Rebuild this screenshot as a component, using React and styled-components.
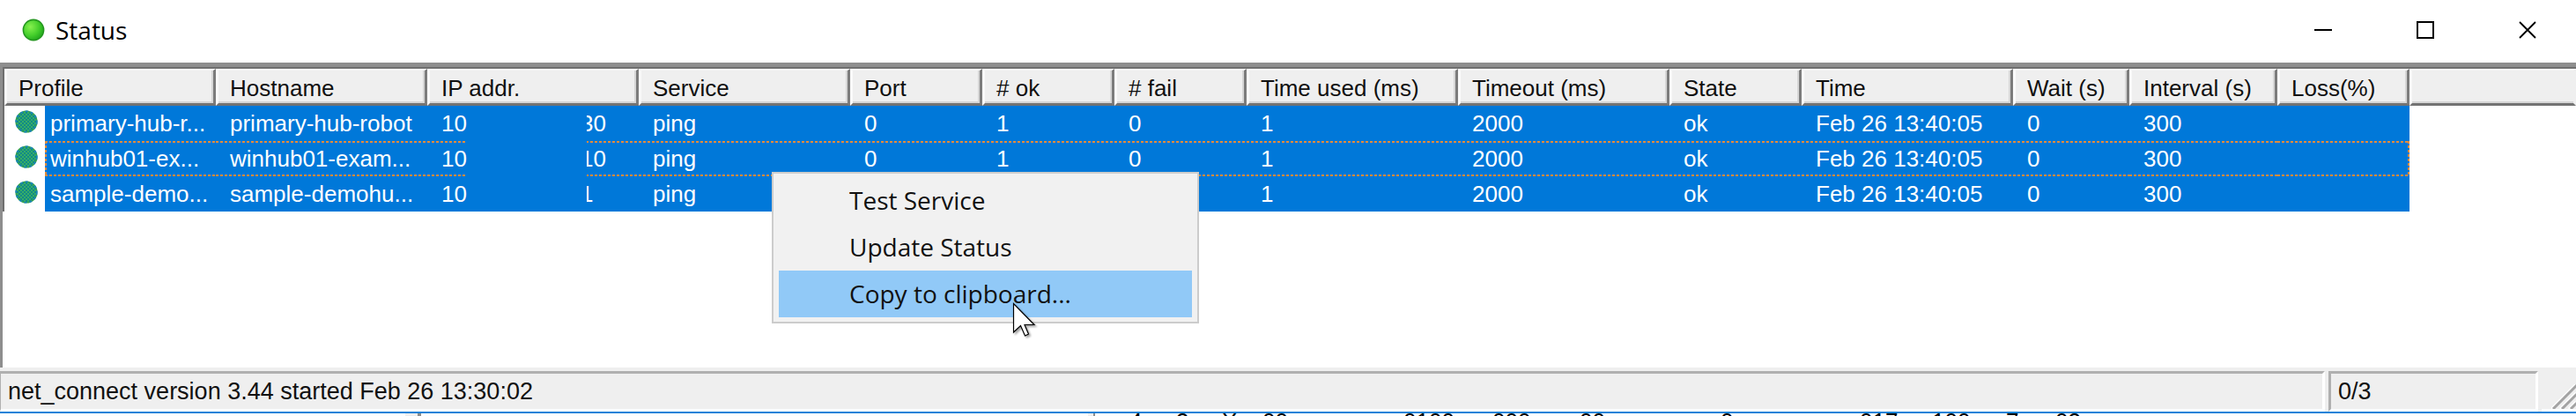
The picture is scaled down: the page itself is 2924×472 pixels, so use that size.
import React from "react"
import styled, { createGlobalStyle } from "styled-components"


const COLUMNS = [
  { label: 'Profile', width: 240 },
  { label: 'Hostname', width: 240 },
  { label: 'IP addr.', width: 240 },
  { label: 'Service', width: 240 },
  { label: 'Port', width: 150 },
  { label: '# ok', width: 150 },
  { label: '# fail', width: 150 },
  { label: 'Time used (ms)', width: 240 },
  { label: 'Timeout (ms)', width: 240 },
  { label: 'State', width: 150 },
  { label: 'Time', width: 240 },
  { label: 'Wait (s)', width: 132 },
  { label: 'Interval (s)', width: 168 },
  { label: 'Loss(%)', width: 150 }
]

const REST = ['ping', '0', '1', '0', '1', '2000', 'ok', 'Feb 26 13:40:05', '0', '300', '']

const ROWS = [
  { profile: 'primary-hub-r...', host: 'primary-hub-robot', ipEnd: '30' },
  { profile: 'winhub01-ex...', host: 'winhub01-exam...', ipEnd: '10', focused: true },
  { profile: 'sample-demo...', host: 'sample-demohu...', ipEnd: '1' }
]

const MENU = ['Test Service', 'Update Status', 'Copy to clipboard...']

// the window behind, only its top edge is visible
const BEHIND = ['4', '3', 'X', '00', '0100', '000', '00', '0', '017', '100', '7', '03']

const GlobalStyle = createGlobalStyle`
  * {
    box-sizing: border-box;
  }

  body {
    margin: 0;
    background: white;
    overflow: hidden;
  }

  button {
    border: 0 none;
    margin: 0;
    padding: 0;
    background: none;
    font: inherit;
    color: inherit;
  }
`

const Window = styled.main`
  position: relative;
  display: flex;
  flex-direction: column;
  min-height: 100vh;
  font-family: "Liberation Sans", Arial, sans-serif;
  font-size: 26px;
  line-height: 30px;
  color: #111;
`

const TitleBar = styled.header`
  display: flex;
  align-items: center;
  height: 71px;
  padding-left: 25px;
  padding-bottom: 4px;
`

const Title = styled.h1`
  flex: 1;
  margin: 0 0 0 12px;
  font-family: "Open Sans", "Noto Sans", sans-serif;
  font-size: 28px;
  font-weight: 400;
  line-height: 36px;
  color: black;
`

const WindowButtons = styled.div`
  display: flex;
  gap: 6px;
`

const WindowButton = styled.button`
  display: flex;
  align-items: center;
  justify-content: center;
  width: 110px;
  height: 60px;
`

const ListFrame = styled.section`
  flex: 1;
  border-top: 5px solid #8e8e8e;
  border-left: 3px solid #8e8e8e;
`

const List = styled.div`
  height: 100%;
  border-top: 2px solid #6f6f6f;
  border-left: 2px solid #6f6f6f;
  overflow: hidden;
`

const Table = styled.table`
  width: 100%;
  table-layout: fixed;
  border-collapse: separate;
  border-spacing: 0;
`

const HeadCell = styled.th`
  height: 42px;
  padding: 2px 0 0 13px;
  background: #efefef;
  border-top: 2px solid #fafafa;
  border-left: 3px solid #fafafa;
  border-right: 3px solid ${props => props.$last ? '#efefef' : '#7c7c7c'};
  border-bottom: 3px solid #737373;
  box-shadow: inset ${props => props.$last ? 0 : -2}px -2px 0 #d6d6d6;
  font-weight: 400;
  text-align: left;
  white-space: nowrap;
`

const focusDots = `
  repeating-linear-gradient(90deg, #e08c3c 0 3px, transparent 3px 5px) top / 100% 2px no-repeat,
  repeating-linear-gradient(90deg, #e08c3c 0 3px, transparent 3px 5px) bottom / 100% 2px no-repeat,
`

const sideDots = side => `
  repeating-linear-gradient(#e08c3c 0 3px, transparent 3px 5px) ${side} / 2px 100% no-repeat,
`

const Selection = styled.div`
  display: flex;
  flex: 1;
  align-items: center;
  height: 40px;
  padding-left: ${props => props.$first ? 6 : 16}px;
  background:
    ${props => props.$focused ? focusDots : ''}
    ${props => props.$focused && props.$first ? sideDots('left') : ''}
    ${props => props.$focused && props.$last ? sideDots('right') : ''}
    linear-gradient(#0078d9, #0078d9);
  color: white;
  white-space: nowrap;
`

const Cell = styled.td`
  padding: 0;
`

const ProfileCell = styled.div`
  display: flex;
`

const StateIcon = styled.span`
  display: flex;
  align-items: center;
  width: 46px;
  padding-left: 12px;
  padding-bottom: 4px;
`

const Redacted = styled.span`
  z-index: 1;
  width: 136px;
  height: 40px;
  margin-right: -7px;
  background: #0078d9;
`

const StatusBar = styled.footer`
  display: flex;
  gap: 4px;
  height: 50px;
  padding-top: 4px;
  background: #efefef;
  font-size: 27px;
`

const Panel = styled.div`
  display: flex;
  align-items: center;
  flex: ${props => props.$width ? `0 0 ${props.$width}px` : 1};
  padding-left: 8px;
  border: 3px solid white;
  border-top-color: #b0b0b0;
  border-left: ${props => props.$width ? 3 : 1}px solid #b0b0b0;
`

const Grip = styled.div`
  display: flex;
  align-items: flex-end;
  justify-content: flex-end;
  width: 39px;
  border-bottom: 3px solid white;
`

const Behind = styled.div`
  display: grid;
  grid-template-columns: 460px 775px 47px 53px 52px 46px 160px 101px 99px 160px 158px 82px 84px 56px 1fr;
  height: 5px;
  border-top: 2px solid #1683d8;
  overflow: hidden;
  font-size: 26px;
  line-height: 18px;
  color: black;
`

const BehindEdge = styled.span`
  width: ${props => props.$width}px;
  height: 3px;
  background: #eee;
  border-right: ${props => props.$line}px solid #8c8c8c;
`

const Menu = styled.div`
  position: absolute;
  top: 195px;
  left: 876px;
  z-index: 2;
  display: flex;
  flex-direction: column;
  width: 485px;
  padding: 4px 6px 5px;
  background: #f1f1f1;
  border: 2px solid #cccccc;
`

const MenuItem = styled.button`
  height: 53px;
  padding: 0 0 2px 80px;
  background: ${props => props.$active ? '#91c9f7' : 'transparent'};
  font-family: "Open Sans", "Noto Sans", sans-serif;
  font-size: 28px;
  line-height: 36px;
  text-align: left;
`

const Pointer = styled.svg`
  position: absolute;
  top: 342px;
  left: 1149px;
  z-index: 3;
  filter: drop-shadow(2px 2px 1px rgba(0, 0, 0, 0.35));
`


const GreenDot = () => (
  <svg width="26" height="26" viewBox="0 0 26 26" aria-hidden="true">
    <defs>
      <radialGradient id="lamp" cx="0.35" cy="0.35" r="0.7">
        <stop offset="0" stopColor="#86f04e" />
        <stop offset="0.6" stopColor="#45cf2c" />
        <stop offset="1" stopColor="#22a81c" />
      </radialGradient>
    </defs>
    <circle cx="13" cy="13" r="11.6" fill="url(#lamp)" stroke="#24961f" strokeWidth="1.6" />
  </svg>
)

const HatchedDot = () => (
  <svg width="26" height="26" viewBox="0 0 26 26" aria-hidden="true">
    <defs>
      <pattern id="hatch" width="4" height="4" patternUnits="userSpaceOnUse">
        <rect width="4" height="4" fill="#128a86" />
        <rect width="2" height="2" fill="#35ad68" />
        <rect x="2" y="2" width="2" height="2" fill="#35ad68" />
      </pattern>
    </defs>
    <circle cx="13" cy="13" r="11.8" fill="url(#hatch)" stroke="#35a04f" strokeWidth="1.6" />
    <circle cx="13" cy="13" r="11.8" fill="none" stroke="#1683c4" strokeWidth="1.6" strokeDasharray="3 3" />
  </svg>
)

const StatusTable = () => (
  <Table>
    <colgroup>
      { COLUMNS.map((column) => <col key={column.label} style={{ width: column.width }} />) }
      <col />
    </colgroup>
    <thead>
      <tr>
        { COLUMNS.map((column) => (
          <HeadCell key={column.label} scope="col">{column.label}</HeadCell>
        )) }
        <HeadCell as="td" $last />
      </tr>
    </thead>
    <tbody>
      { ROWS.map((row) => (
        <tr key={row.profile} aria-selected="true">
          <Cell>
            <ProfileCell>
              <StateIcon><HatchedDot /></StateIcon>
              <Selection $first $focused={row.focused}>{row.profile}</Selection>
            </ProfileCell>
          </Cell>
          <Cell><Selection $focused={row.focused}>{row.host}</Selection></Cell>
          <Cell>
            <Selection $focused={row.focused}>
              10
              <Redacted />
              {row.ipEnd}
            </Selection>
          </Cell>
          { REST.map((value, i) => (
            <Cell key={i}>
              <Selection $focused={row.focused} $last={i === REST.length - 1}>{value}</Selection>
            </Cell>
          )) }
          <Cell />
        </tr>
      )) }
    </tbody>
  </Table>
)

const ContextMenu = () => (
  <Menu role="menu">
    { MENU.map((item, i) => (
      <MenuItem key={item} type="button" role="menuitem" $active={i === 2}>{item}</MenuItem>
    )) }
  </Menu>
)

const App = () => (
  <>
    <GlobalStyle />
    <Window>
      <TitleBar>
        <GreenDot />
        <Title>Status</Title>
        <WindowButtons>
          <WindowButton type="button" aria-label="Minimize">
            <svg width="20" height="20"><path d="M0 10H20" stroke="black" strokeWidth="2" /></svg>
          </WindowButton>
          <WindowButton type="button" aria-label="Maximize">
            <svg width="20" height="20"><rect x="1" y="1" width="18" height="18" fill="none" stroke="black" strokeWidth="2" /></svg>
          </WindowButton>
          <WindowButton type="button" aria-label="Close">
            <svg width="20" height="20"><path d="M1 1L19 19M19 1L1 19" stroke="black" strokeWidth="1.8" /></svg>
          </WindowButton>
        </WindowButtons>
      </TitleBar>
      <ListFrame>
        <List>
          <StatusTable />
        </List>
      </ListFrame>
      <StatusBar>
        <Panel>net_connect version 3.44 started Feb 26 13:30:02</Panel>
        <Panel $width={238}>0/3</Panel>
        <Grip>
          <svg width="28" height="28" viewBox="0 0 28 28" aria-hidden="true">
            <path d="M0 28L28 0M10 28L28 10M20 28L28 20" stroke="white" strokeWidth="3" />
            <path d="M2 28L30 0M12 28L30 10M22 28L30 20" stroke="#a3a3a3" strokeWidth="3" />
          </svg>
        </Grip>
      </StatusBar>
      <Behind aria-hidden="true">
        <span />
        <BehindEdge $width={18} $line={4} />
        <BehindEdge $width={8} $line={2} />
        { BEHIND.map((text, i) => <span key={i}>{text}</span>) }
      </Behind>
      <ContextMenu />
      <Pointer width="30" height="42" viewBox="0 0 30 42" aria-hidden="true">
        <path d="M1.5 2.5V35L9.5 27.5L14.5 39L18.5 37L14 26.500H25Z" fill="white" stroke="black" strokeWidth="1.2" />
      </Pointer>
    </Window>
  </>
)

export default App
